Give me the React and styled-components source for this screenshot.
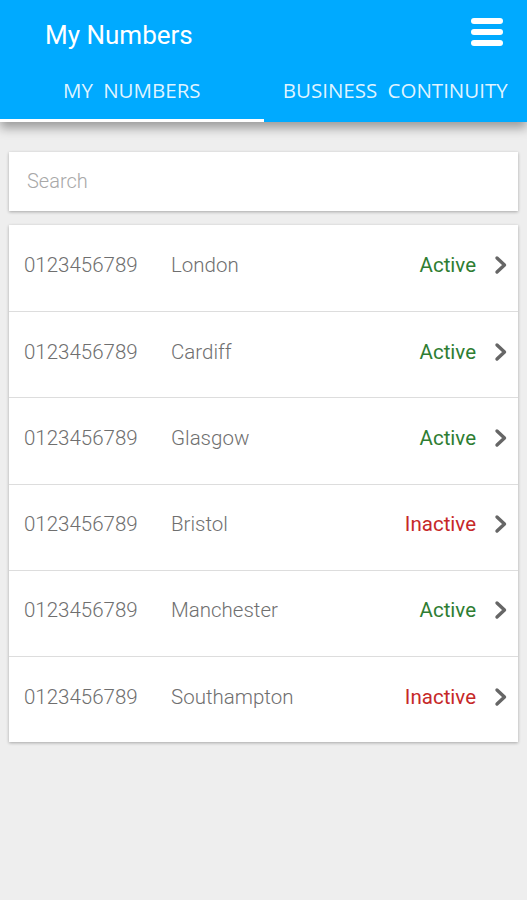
import React from 'react';
import styled, { createGlobalStyle } from 'styled-components';

const GlobalStyle = createGlobalStyle`
  html, body {
    margin: 0;
    padding: 0;
    background: #eeeeee;
    font-family: Roboto, "Liberation Sans", sans-serif;
  }
  * { box-sizing: border-box; }
`;

const Page = styled.div`
  width: 527px;
  min-height: 900px;
  background: #eeeeee;
`;

const Header = styled.header`
  background: #00aaff;
  box-shadow: 0 6px 10px rgba(0, 0, 0, 0.35);
  position: relative;
  z-index: 1;
`;

const TopBar = styled.div`
  height: 70px;
  display: flex;
  align-items: center;
  justify-content: space-between;
  padding: 0 24px 0 45px;
`;

const Title = styled.h1`
  margin: 0;
  font-size: 26px;
  font-weight: 400;
  color: #ffffff;
  padding-bottom: 0;
`;

const MenuButton = styled.div`
  width: 32px;
  height: 28px;
  display: flex;
  flex-direction: column;
  justify-content: space-between;
  margin-bottom: 6px;
  span {
    display: block;
    height: 6px;
    border-radius: 3px;
    background: #ffffff;
  }
`;

const Tabs = styled.nav`
  display: flex;
`;

const Tab = styled.div`
  flex: 1;
  height: 52px;
  display: flex;
  align-items: center;
  justify-content: center;
  padding-bottom: 10px;
  font-family: "Open Sans", "DejaVu Sans", sans-serif;
  font-size: 20.5px;
  word-spacing: 5px;
  color: rgba(255, 255, 255, 0.88);
  border-bottom: 3px solid ${(p) => (p.active ? '#ffffff' : 'transparent')};
  white-space: nowrap;
`;

const Content = styled.main`
  padding: 30px 9px;
  display: flex;
  flex-direction: column;
  gap: 14px;
`;

const Card = styled.div`
  background: #ffffff;
  box-shadow: 0 1px 3px rgba(0, 0, 0, 0.3);
`;

const SearchInput = styled.input`
  display: block;
  width: 100%;
  height: 59px;
  border: none;
  outline: none;
  padding: 0 18px 2px;
  font-family: Roboto, "Liberation Sans", sans-serif;
  font-size: 20px;
  font-weight: 300;
  color: #555;
  background: transparent;
  &::placeholder {
    color: #a8a8a8;
  }
`;

const Row = styled.div`
  height: 86.2px;
  display: flex;
  align-items: center;
  padding: 0 10px 6px 15px;
  font-size: 20.5px;
  font-weight: 300;
  color: #6f6f6f;
  & + & {
    border-top: 1px solid #dddddd;
  }
`;

const Num = styled.span`
  width: 147px;
`;

const City = styled.span`
  flex: 1;
`;

const Status = styled.span`
  color: ${(p) => (p.active ? '#2e7d32' : '#c62828')};
  font-weight: 400;
  margin-right: 18px;
`;

const Chevron = () => (
  <svg width="14" height="20" viewBox="0 0 14 20">
    <path d="M3 3 L10.5 10 L3 17" fill="none" stroke="#666" strokeWidth="3.4" strokeLinecap="round" strokeLinejoin="round" />
  </svg>
);

const numbers = [
  { num: '0123456789', city: 'London', active: true },
  { num: '0123456789', city: 'Cardiff', active: true },
  { num: '0123456789', city: 'Glasgow', active: true },
  { num: '0123456789', city: 'Bristol', active: false },
  { num: '0123456789', city: 'Manchester', active: true },
  { num: '0123456789', city: 'Southampton', active: false },
];

export default function App() {
  return (
    <Page>
      <GlobalStyle />
      <Header>
        <TopBar>
          <Title>My Numbers</Title>
          <MenuButton>
            <span />
            <span />
            <span />
          </MenuButton>
        </TopBar>
        <Tabs>
          <Tab active>MY NUMBERS</Tab>
          <Tab>BUSINESS CONTINUITY</Tab>
        </Tabs>
      </Header>
      <Content>
        <Card>
          <SearchInput placeholder="Search" />
        </Card>
        <Card>
          {numbers.map((n) => (
            <Row key={n.city}>
              <Num>{n.num}</Num>
              <City>{n.city}</City>
              <Status active={n.active}>{n.active ? 'Active' : 'Inactive'}</Status>
              <Chevron />
            </Row>
          ))}
        </Card>
      </Content>
    </Page>
  );
}
